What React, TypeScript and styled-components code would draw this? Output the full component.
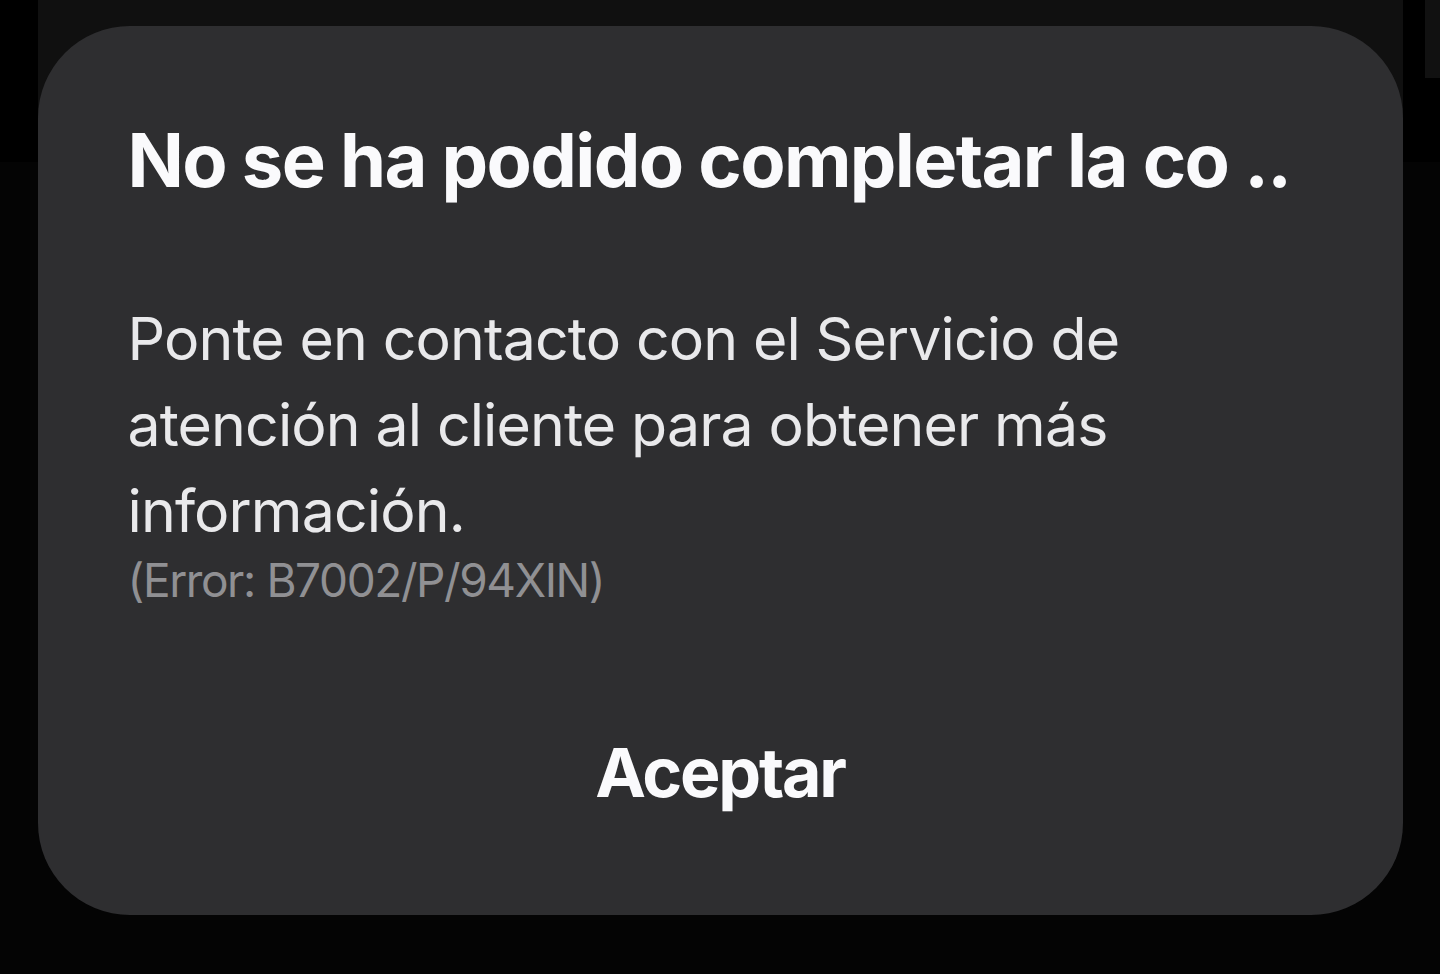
import React from "react";
import styled, { createGlobalStyle } from "styled-components";

const Global = createGlobalStyle`
  html, body { margin: 0; padding: 0; background: #000; }
  body { font-family: Inter, "Noto Sans", sans-serif; -webkit-font-smoothing: antialiased; }
`;

const Screen = styled.div`
  position: relative;
  width: 1440px;
  height: 974px;
  background: #000;
  overflow: hidden;
  display: flex;
  flex-direction: column;
  align-items: center;
`;

const BackdropTop = styled.div`
  position: absolute;
  top: 0;
  left: 38px;
  width: 1365px;
  height: 162px;
  background: #101010;
`;

const BackdropCorner = styled.div`
  position: absolute;
  top: 0;
  right: 0;
  width: 15px;
  height: 78px;
  background: #111111;
`;

const BackdropLower = styled.div`
  position: absolute;
  top: 162px;
  left: 0;
  right: 0;
  bottom: 0;
  background: #040404;
`;

const Dialog = styled.div`
  position: relative;
  margin-top: 26px;
  width: 1365px;
  height: 889px;
  box-sizing: border-box;
  background: #2e2e30;
  border-radius: 92px;
  padding: 84px 90px 0 90px;
  display: flex;
  flex-direction: column;
`;

const Title = styled.h1`
  margin: 0;
  font-size: 74px;
  line-height: 100px;
  font-weight: 700;
  color: #fafafc;
  letter-spacing: -1.65px;
  white-space: nowrap;
`;

const Body = styled.p`
  margin: 86px 0 0 0;
  font-size: 59px;
  line-height: 86px;
  font-weight: 400;
  color: #e9e9eb;
  letter-spacing: -0.88px;
`;

const ErrorCode = styled.p`
  margin: 0;
  font-size: 46px;
  line-height: 52px;
  font-weight: 400;
  color: #909093;
  letter-spacing: -1.4px;
`;

const Actions = styled.div`
  margin-top: 116px;
  display: flex;
  justify-content: center;
`;

const ActionButton = styled.button`
  border: none;
  background: none;
  padding: 0;
  font-family: inherit;
  font-size: 68px;
  line-height: 100px;
  font-weight: 700;
  color: #fafafc;
  letter-spacing: -2.2px;
`;

export default function App() {
  return (
    <>
      <Global />
      <Screen>
        <BackdropLower />
        <BackdropTop />
        <BackdropCorner />
        <Dialog>
          <Title>No se ha podido completar la co ..</Title>
          <Body>
            Ponte en contacto con el Servicio de
            <br />
            atención al cliente para obtener más
            <br />
            información.
          </Body>
          <ErrorCode>(Error: B7002/P/94XIN)</ErrorCode>
          <Actions>
            <ActionButton>Aceptar</ActionButton>
          </Actions>
        </Dialog>
      </Screen>
    </>
  );
}
